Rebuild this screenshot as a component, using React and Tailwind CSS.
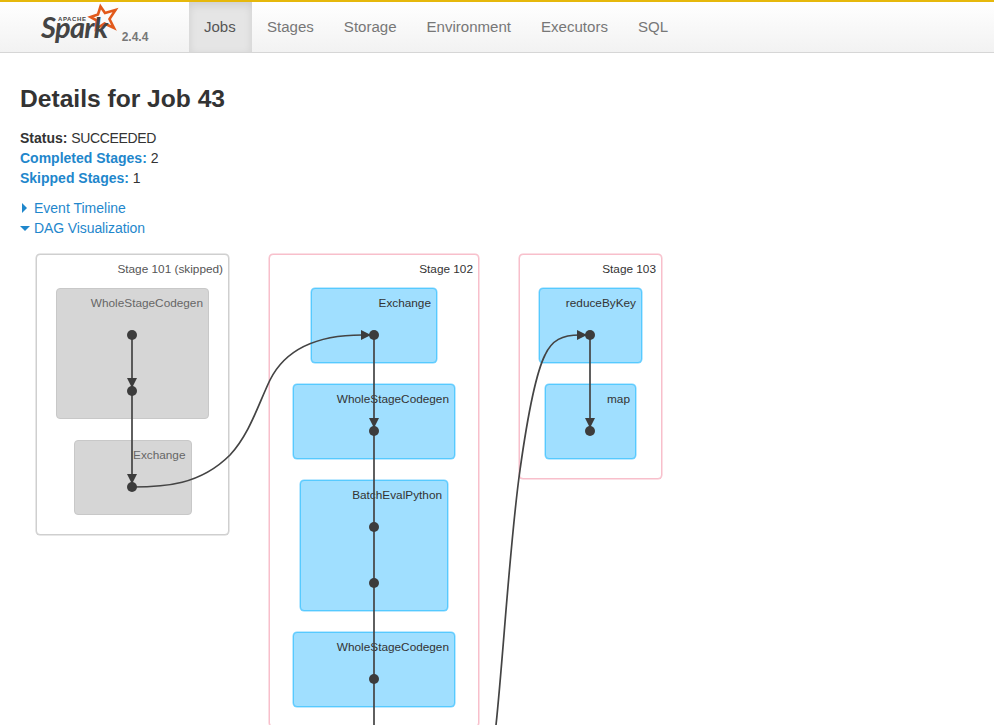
import React from "react";

const tabs = ["Jobs", "Stages", "Storage", "Environment", "Executors", "SQL"];

function Logo() {
    return (
        <div className="relative flex items-start w-[189px] shrink-0 pl-[41px] pt-[14px]">
            <svg className="absolute left-[85px] top-0" width="36" height="34" viewBox="85 2 36 34">
                <path
                    d="M100.5 6.5 L105 13 L115.5 10 L109.5 19 L114 28 L104.5 23.5 L96 29 L96.8 20.5 L90.5 17 L98 14.5 Z"
                    fill="none"
                    stroke="#e25a1c"
                    strokeWidth="2.6"
                />
            </svg>
            <div className="relative flex flex-col">
                <span className="ml-[17px] text-[6px] leading-[7px] font-bold tracking-[0.6px] text-[#444]">APACHE</span>
                <span className="text-[29px] leading-[8px] font-bold italic tracking-[-0.7px] text-[#444] font-['Lato',sans-serif]">Spark</span>
            </div>
            <span className="mt-[14px] ml-[14px] text-[12px] leading-[14px] font-bold text-[#777]">2.4.4</span>
        </div>
    );
}

function Navbar() {
    return (
        <div className="flex h-[53px] border-t-2 border-b border-t-[#e6b80c] border-b-[#d6d6d6] bg-gradient-to-b from-white to-[#f2f2f2]">
            <Logo />
            <ul className="flex">
                {tabs.map(tab => (
                    <li
                        key={tab}
                        className={
                            tab === "Jobs"
                                ? "flex items-center w-[63px] pl-[15px] text-[15px] text-[#555] bg-[#e5e5e5] shadow-[inset_0_3px_8px_rgba(0,0,0,0.1)]"
                                : "flex items-center px-[15px] text-[15.05px] text-[#777]"
                        }
                    >
                        {tab}
                    </li>
                ))}
            </ul>
        </div>
    );
}

function Summary() {
    return (
        <div>
            <h3 className="mt-[31px] text-[24.6px] leading-[30px] font-bold text-[#333]">Details for Job 43</h3>
            <ul className="mt-[14px] text-[14px] leading-5 text-[#333]">
                <li><strong>Status:</strong> <span className="tracking-[-0.35px]">SUCCEEDED</span></li>
                <li><strong className="text-[#1f87cc]">Completed Stages:</strong> 2</li>
                <li><strong className="text-[#1f87cc]">Skipped Stages:</strong> 1</li>
            </ul>
            <div className="mt-[10px] text-[14px] leading-5 text-[#1f87cc]">
                <div className="flex items-center">
                    <span className="ml-[2px] mr-[7px] w-0 h-0 border-y-[5px] border-y-transparent border-l-[5px] border-l-[#1f87cc]"></span>
                    Event Timeline
                </div>
                <div className="flex items-center tracking-[-0.1px]">
                    <span className="mr-[4px] w-0 h-0 border-x-[5px] border-x-transparent border-t-[5px] border-t-[#1f87cc]"></span>
                    DAG Visualization
                </div>
            </div>
        </div>
    );
}

function Stage({ label, className, skipped, children }) {
    return (
        <div
            className={`flex flex-col items-center shrink-0 rounded-[4px] bg-white pt-[7px] pb-[19px] border ${
                skipped
                    ? "border-[#cfcfcf] shadow-[0_0_0_0.5px_#cfcfcf]"
                    : "border-[#f8bfcb] shadow-[0_0_0_0.5px_#f8bfcb]"
            } ${className}`}
        >
            <div className={`self-end pr-[5px] text-[11.8px] leading-[14px] ${skipped ? "text-[#555]" : "text-[#333]"}`}>{label}</div>
            <div className="mt-3 flex flex-col items-center gap-[21px]">{children}</div>
        </div>
    );
}

function Cluster({ label, className, skipped }) {
    return (
        <div
            className={`pt-[7px] pr-[5px] rounded-[4px] border text-right text-[11.8px] leading-[14px] whitespace-nowrap ${
                skipped
                    ? "bg-[#d6d6d6] border-[#c8c8c8] text-[#666]"
                    : "bg-[#a0dfff] border-[#56caff] shadow-[0_0_0_0.5px_#7fd4ff] text-[#333]"
            } ${className}`}
        >
            {label}
        </div>
    );
}

function Edges() {
    const dots = [
        [132, 335], [132, 391], [132, 487],
        [374, 335], [374, 431], [374, 527], [374, 583], [374, 679],
        [590, 335], [590, 431],
    ];
    const downArrows = [[132, 391], [132, 487], [374, 431], [590, 431]];
    return (
        <svg className="absolute left-0 top-0 pointer-events-none" width="994" height="725" viewBox="0 0 994 725">
            <g fill="none" stroke="#444" strokeWidth="1.7">
                <path d="M132 335 V487" />
                <path d="M374 335 V725" />
                <path d="M590 335 V431" />
                <path d="M132 487 C165 487 200 485 230 455 C250 433 258 405 270 380 C285 350 315 335 362 335" />
                <path d="M496 725 C503 660 510 540 520 470 C527 420 535 375 545 355 C552 340 562 335 580 335" />
            </g>
            <g fill="#3c3c3c">
                {downArrows.map(([x, y]) => (
                    <polygon key={`${x}-${y}`} points={`${x - 5},${y - 13} ${x + 5},${y - 13} ${x},${y - 3}`} />
                ))}
                <polygon points="361,330 371,335 361,340" />
                <polygon points="577,330 587,335 577,340" />
                {dots.map(([x, y]) => (
                    <circle key={`${x}-${y}`} cx={x} cy={y} r="5" />
                ))}
            </g>
        </svg>
    );
}

function Dag() {
    return (
        <div className="mt-4 ml-4 flex items-start gap-10">
            <Stage label="Stage 101 (skipped)" skipped className="w-[193px]">
                <Cluster skipped label="WholeStageCodegen" className="w-[153px] h-[131px]" />
                <Cluster skipped label="Exchange" className="w-[118px] h-[75px]" />
            </Stage>
            <Stage label="Stage 102" className="w-[210px]">
                <Cluster label="Exchange" className="w-[126px] h-[75px]" />
                <Cluster label="WholeStageCodegen" className="w-[162px] h-[75px]" />
                <Cluster label="BatchEvalPython" className="w-[148px] h-[131px]" />
                <Cluster label="WholeStageCodegen" className="w-[162px] h-[75px]" />
            </Stage>
            <Stage label="Stage 103" className="w-[143px]">
                <Cluster label="reduceByKey" className="w-[103px] h-[75px]" />
                <Cluster label="map" className="w-[91px] h-[75px]" />
            </Stage>
        </div>
    );
}

export default function App() {
    return (
        <div className="relative h-[725px] overflow-hidden bg-white font-['Liberation_Sans',Arial,sans-serif]">
            <Navbar />
            <div className="px-5">
                <Summary />
                <Dag />
            </div>
            <Edges />
        </div>
    );
}
